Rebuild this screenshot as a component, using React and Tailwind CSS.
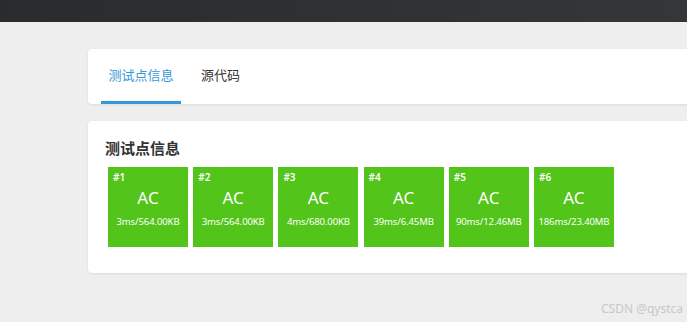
import React from 'react';

const cases = [
    { id: 1, detail: '3ms/564.00KB' },
    { id: 2, detail: '3ms/564.00KB' },
    { id: 3, detail: '4ms/680.00KB' },
    { id: 4, detail: '39ms/6.45MB' },
    { id: 5, detail: '90ms/12.46MB' },
    { id: 6, detail: '186ms/23.40MB' },
];

const cjk = "font-['Noto_Sans','Noto_Sans_CJK_SC',sans-serif]";

const CaseBox = ({ id, detail }) => (
    <div className="w-[80px] h-[80px] bg-[#52c41a] text-white flex flex-col shrink-0">
        <div className="h-[20px] pl-[5px] pt-[4px] text-[10px] leading-[12px] font-semibold">#{id}</div>
        <div className="text-center text-[17px] leading-[22px]">AC</div>
        <div className="text-center text-[9.5px] leading-[12px] mt-[7px] tracking-[-0.1px]">{detail}</div>
    </div>
);

const App = () => {
    return (
        <div className={`w-[687px] h-[322px] bg-[#eeeeee] overflow-hidden relative ${cjk}`}>
            <div className="h-[22px] bg-gradient-to-r from-[#2a2b2d] to-[#353637]" />

            <div className="ml-[88px] mt-[27px] w-[640px] bg-white rounded-[4px] shadow-[0_1px_3px_rgba(0,0,0,0.08)] h-[55px] flex items-end pl-[13px] gap-[20px]">
                <div className="w-[80px] h-[55px] flex flex-col justify-end">
                    <div className="text-[13px] leading-[18px] text-[#3498db] text-center mb-[17px]">测试点信息</div>
                    <div className="h-[3px] bg-[#3498db]" />
                </div>
                <div className="h-[55px] flex flex-col justify-end">
                    <div className="text-[13px] leading-[18px] text-[#333] mb-[20px]">源代码</div>
                </div>
            </div>

            <div className="ml-[88px] mt-[17px] w-[640px] bg-white rounded-[4px] shadow-[0_1px_3px_rgba(0,0,0,0.08)] h-[152px] pl-[17px]">
                <div className="pt-[17px] text-[15px] leading-[20px] font-bold text-[#333]">测试点信息</div>
                <div className="flex gap-[5.2px] pl-[3px] mt-[9px]">
                    {cases.map((c) => (
                        <CaseBox key={c.id} {...c} />
                    ))}
                </div>
            </div>

            <div className="absolute right-[4px] bottom-[5px] text-[12px] leading-[16px] text-[#c8c8c8]">CSDN @qystca</div>
        </div>
    );
};

export default App;
